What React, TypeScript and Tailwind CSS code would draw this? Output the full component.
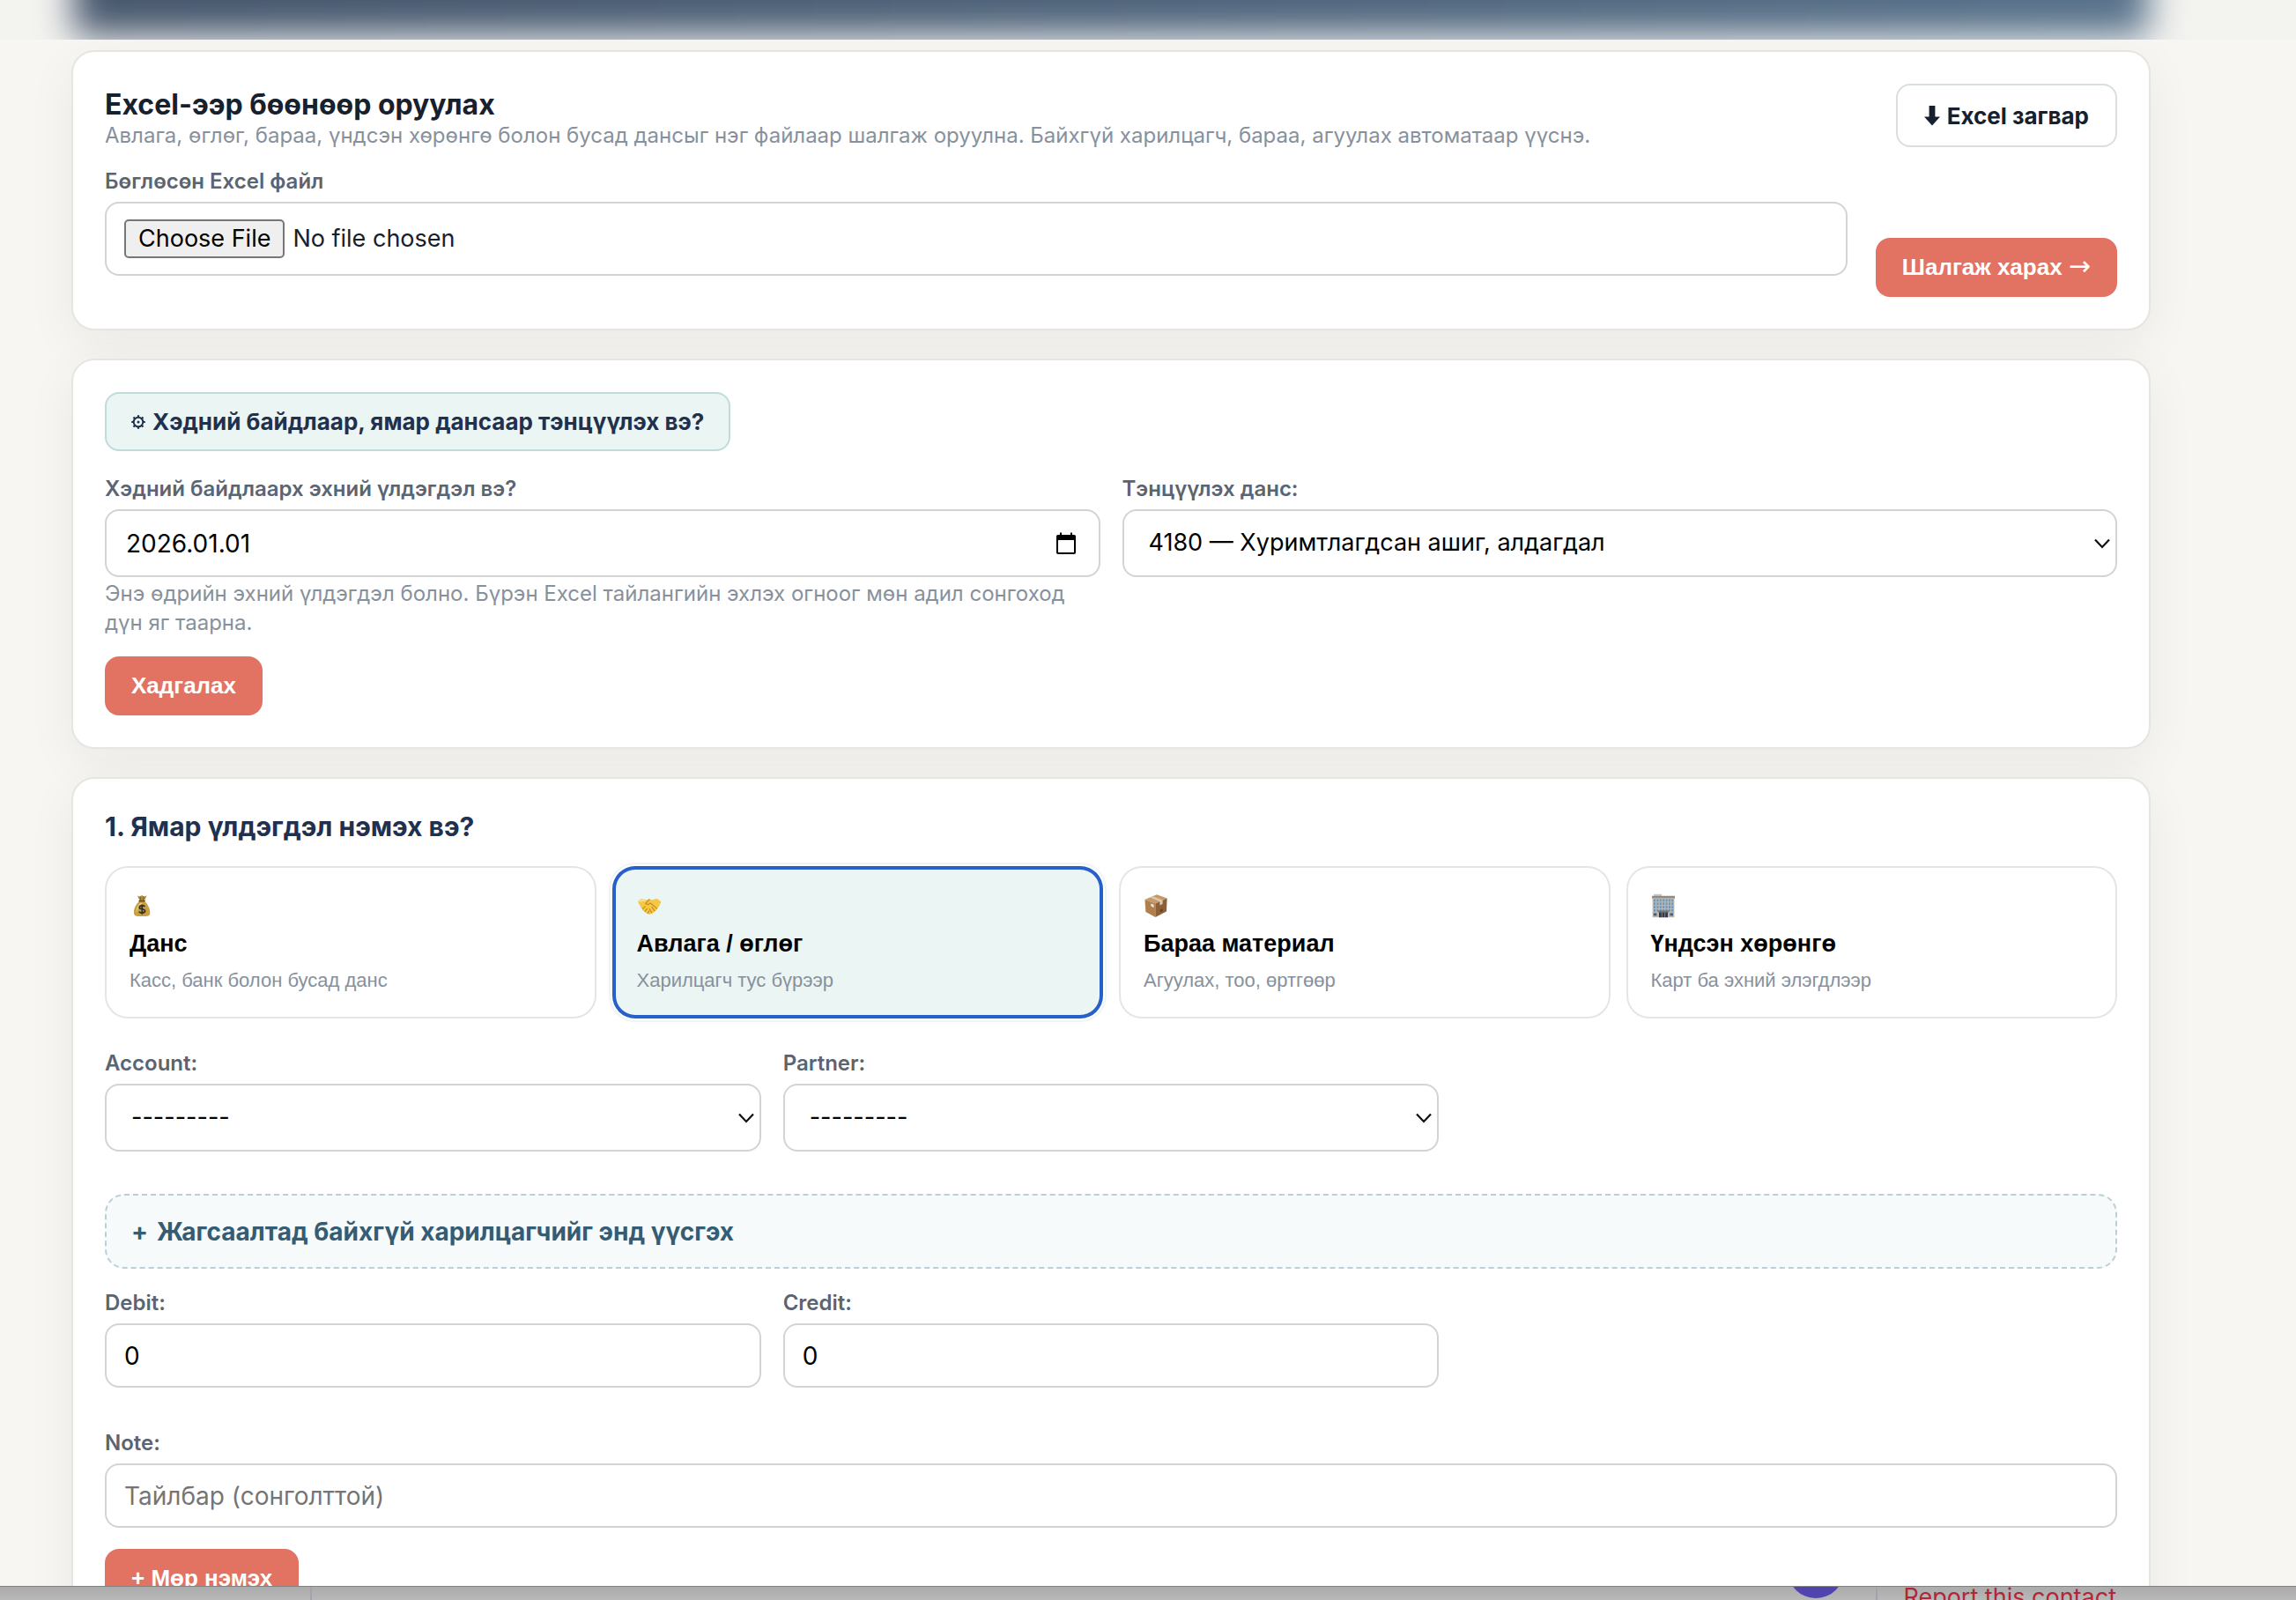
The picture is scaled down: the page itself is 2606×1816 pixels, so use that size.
import React, { useState } from 'react';

const label = 'block text-[24px] leading-[24px] font-semibold text-[#5b6471]';
const control =
  'w-full bg-white border-2 border-[#d0d5d4] rounded-[16px] text-black outline-none focus:border-[#2860cb]';
const primary =
  "h-[67px] px-[30px] rounded-[16px] bg-[#e27362] text-white font-bold text-[26px] font-['Liberation_Sans',sans-serif] whitespace-nowrap";
const hint = 'text-[24px] leading-[33px] text-[#87919c]';

const MoneyBag = () => (
  <svg viewBox="0 0 28 28" className="size-7" aria-hidden="true">
    <path d="M9 2.5 L11 3.5 L14 2.2 L17 3.5 L19.5 2.5 L17 8.5 H11.5 Z" fill="#b58a38" />
    <path d="M12 4 L13 8 M16 4 L15.4 8" stroke="#7c5a1e" strokeWidth="1" />
    <path d="M11.3 9 C7 12 4.5 18 5 22.5 C5.3 25.5 7 26 14 26 C21.5 26 23 25.5 23.3 22.5 C23.6 18 21 12 17 9 Z" fill="#c9a144" />
    <path d="M12 11 C9 14 7.5 18 7.7 21.5 C9 19 11 14 15 11 Z" fill="#ecd27c" />
    <path d="M11 8.8 H17.2" stroke="#6d4d18" strokeWidth="1.6" strokeLinecap="round" />
    <path
      d="M17.4 14.8 C16.6 13.4 11.2 13.2 11.2 15.9 C11.2 18.5 17.6 17 17.6 20 C17.6 22.7 11.6 22.5 10.9 20.6 M14.3 12.4 V23.8"
      fill="none"
      stroke="#33302c"
      strokeWidth="1.7"
    />
  </svg>
);

const Handshake = () => (
  <svg viewBox="0 0 28 28" className="size-7" aria-hidden="true">
    <path
      d="M1 9.5 C2.5 7.5 4 6.5 6 6.2 L10.5 7.6 L14 6.6 L17 7.5 L22 6 C24 6.6 26 8 27.4 9.8 L24.6 15.5 L22.6 17.6 C22 19.6 20.8 20.6 19.4 20.8 C18.6 22.4 17.2 23 16 23 C14.6 24.4 13 24 12.2 22.8 C10.4 22.9 9.2 22 8.8 20.6 C7 20.4 6 19.2 6 17.8 C4.6 17 4 16 4 14.8 Z"
      fill="#f5c843"
    />
    <path d="M2.6 9.4 C4 8 6 7.4 9.5 8.6" stroke="#fbe48a" strokeWidth="1.6" fill="none" />
    <path
      d="M14 7 L9.8 11.4 C11.4 13.4 13.6 12.4 15.4 11 L22.6 17.4 M17 15.6 L20 19.8 M14.2 17.8 L16.8 22 M6.6 17.6 L9 15 M9 20.4 L11.4 17.6 M12 22.6 L13.8 20.2"
      stroke="#c98a1e"
      strokeWidth="1.2"
      fill="none"
      strokeLinecap="round"
    />
  </svg>
);

const Package = () => (
  <svg viewBox="0 0 28 28" className="size-7" aria-hidden="true">
    <path d="M1.4 7 L15 1.2 L26.6 5.6 L13.4 11.6 Z" fill="#c79a6c" />
    <path d="M1.4 7 L13.4 11.6 V27 L2.4 21 Z" fill="#b07f50" />
    <path d="M26.6 5.6 L13.4 11.6 V27 L26 20.4 Z" fill="#8d6038" />
    <path d="M7.2 4.6 L10.2 3.3 L21.6 7.8 V12 L18.4 13.4 V9.3 Z" fill="#dcc9b0" />
    <path d="M8.4 11.6 L11.6 12.8 V16.2 L8.4 14.6 Z" fill="#e9e4dc" />
    <path d="M19 18.6 L21.6 17.4 V20 L19 21.2 Z" fill="#5f3f22" />
  </svg>
);

const Office = () => (
  <svg viewBox="0 0 28 28" className="size-7" aria-hidden="true">
    <rect x="3" y="0.8" width="9" height="3" fill="#c9c9c6" />
    <rect x="1" y="2.8" width="26" height="3" fill="#8f8b85" />
    <rect x="1.6" y="5.4" width="24.8" height="21.8" fill="#b9b8b3" />
    {[6.6, 10.4, 14.2, 18].map((y) =>
      [3, 6.4, 9.8, 13.2, 16.6, 20, 23.2].map((x) => (
        <rect key={`${x}-${y}`} x={x} y={y} width="2" height="2.7" fill="#6f95b8" />
      )),
    )}
    <rect x="2.8" y="22.4" width="3.6" height="3" fill="#4c6076" />
    <rect x="21.4" y="22.4" width="3.6" height="3" fill="#4c6076" />
    <rect x="8" y="19.4" width="12" height="2" fill="#837468" />
    <rect x="9" y="21.4" width="10" height="5.8" fill="#2f3b4b" />
    <path d="M12.3 21.4 V27.2 M15.7 21.4 V27.2" stroke="#8b98a6" strokeWidth="0.8" />
  </svg>
);

const Gear = () => (
  <svg viewBox="0 0 16 16" className="size-4 shrink-0" fill="none" stroke="#1f314f" aria-hidden="true">
    <circle cx="8" cy="8" r="5.3" strokeWidth="2" />
    <circle cx="8" cy="8" r="1.5" fill="#1f314f" stroke="none" />
    <path
      d="M8 0.2 V2.4 M8 13.6 V15.8 M0.2 8 H2.4 M13.6 8 H15.8 M2.5 2.5 L4.2 4.2 M11.8 11.8 L13.5 13.5 M13.5 2.5 L11.8 4.2 M4.2 11.8 L2.5 13.5"
      strokeWidth="2.2"
    />
  </svg>
);

const Chevron = () => (
  <svg
    viewBox="0 0 18 12"
    className="absolute right-[8px] top-1/2 -mt-[6px] w-[18px] h-[12px] pointer-events-none"
    fill="none"
    stroke="#111"
    strokeWidth="2.2"
    aria-hidden="true"
  >
    <path d="M1 1.5 L9 10 L17 1.5" />
  </svg>
);

const Calendar = () => (
  <svg viewBox="0 0 24 26" className="w-[24px] h-[26px]" aria-hidden="true">
    <path
      d="M5 0.5 H7 V3 H17 V0.5 H19 V3 H21 C22.4 3 23 3.8 23 5 V23 C23 24.3 22.3 25 21 25 H3 C1.7 25 1 24.3 1 23 V5 C1 3.8 1.7 3 3 3 H5 Z M3 9 V23 H21 V9 Z"
      fill="#000"
      fillRule="evenodd"
    />
  </svg>
);

const Card = ({ children }: { children: React.ReactNode }) => (
  <section className="bg-white border-2 border-[#e5e6df] rounded-[26px] p-9 shadow-[0_16px_56px_rgba(30,35,70,0.06)]">
    {children}
  </section>
);

type SelectProps = { id: string; title: string; options: string[] };

const SelectField = ({ id, title, options }: SelectProps) => (
  <div>
    <label htmlFor={id} className={label}>{title}</label>
    <div className="relative mt-[11px]">
      <select id={id} className={`${control} appearance-none h-[77px] pl-[28px] pr-10 text-[27px]`}>
        {options.map((o) => (
          <option key={o}>{o}</option>
        ))}
      </select>
      <Chevron />
    </div>
  </div>
);

type InputProps = { id: string; title: string; value?: string; placeholder?: string };

const InputField = ({ id, title, value, placeholder }: InputProps) => (
  <div>
    <label htmlFor={id} className={label}>{title}</label>
    <input
      id={id}
      type="text"
      defaultValue={value}
      placeholder={placeholder}
      className={`${control} mt-[11px] h-[73px] px-5 text-[28px] placeholder:text-[#757575]`}
    />
  </div>
);

const kinds = [
  { title: 'Данс', text: 'Касс, банк болон бусад данс', icon: <MoneyBag /> },
  { title: 'Авлага / өглөг', text: 'Харилцагч тус бүрээр', icon: <Handshake /> },
  { title: 'Бараа материал', text: 'Агуулах, тоо, өртгөөр', icon: <Package /> },
  { title: 'Үндсэн хөрөнгө', text: 'Карт ба эхний элэгдлээр', icon: <Office /> },
];

const App = () => {
  const [kind, setKind] = useState(1);

  return (
    <div className="h-screen flex flex-col overflow-hidden bg-[#f7f6f2] text-[#17212d] font-[Inter,'Noto_Sans',sans-serif]">
      {/* Frosted top bar with the hero banner behind it */}
      <header className="relative h-[45px] shrink-0 overflow-hidden bg-[#f3f3f0]">
        <div className="absolute left-[84px] right-[168px] -top-20 h-[120px] blur-[20px] bg-linear-to-r from-[#46566c] to-[#57718a]" />
      </header>

      <main className="flex-1 min-h-0 overflow-hidden pt-3 pl-[81px] pr-[165px] flex flex-col gap-8">
        <Card>
          <div className="flex justify-between items-start">
            <div className="pt-[6px]">
              <h2 className="text-[32px] leading-[36px] font-bold">Excel-ээр бөөнөөр оруулах</h2>
              <p className={hint}>
                Авлага, өглөг, бараа, үндсэн хөрөнгө болон бусад дансыг нэг файлаар шалгаж оруулна. Байхгүй харилцагч, бараа, агуулах автоматаар үүснэ.
              </p>
            </div>
            <a
              href="#template"
              className="h-[72px] px-[30px] flex items-center gap-2 rounded-[16px] border-2 border-[#d9dfde] bg-white text-[26px] font-bold whitespace-nowrap"
            >
              <svg viewBox="0 0 18 24" className="w-[18px] h-[24px]" fill="#17212d" aria-hidden="true">
                <path d="M5.6 1 H12.4 V13.5 H18 L9 23.5 L0 13.5 H5.6 Z" />
              </svg>
              Excel загвар
            </a>
          </div>
          <form className="mt-6 flex items-end gap-8">
            <div className="flex-1">
              <label htmlFor="file" className={label}>Бөглөсөн Excel файл</label>
              <input
                id="file"
                type="file"
                className="block w-full mt-[11px] mb-6 h-[84px] px-5 py-[18px] bg-white border-2 border-[#d0d5d4] rounded-[16px] text-[27px] leading-[40px] file:h-[44px] file:px-[14px] file:mr-[9px] file:border-2 file:border-[#767676] file:rounded-[5px] file:bg-[#efefef] file:text-black"
              />
            </div>
            <button type="button" className={primary}>
              Шалгаж харах <span className="font-['DejaVu_Sans'] font-normal text-[30px] leading-none">→</span>
            </button>
          </form>
        </Card>

        <Card>
          <h2 className="w-fit h-[67px] px-[28px] flex items-center gap-2 rounded-[16px] border-2 border-[#bfdcda] bg-[#ebf5f4] text-[26px] font-bold text-[#1f314f]">
            <Gear />
            Хэдний байдлаар, ямар дансаар тэнцүүлэх вэ?
          </h2>
          <form>
            <div className="mt-[31px] grid grid-cols-2 gap-[25px]">
              <div>
                <label htmlFor="date" className={label}>Хэдний байдлаарх эхний үлдэгдэл вэ?</label>
                <div className="mt-[11px] h-[77px] flex items-center pl-[22px] pr-[25px] bg-white border-2 border-[#d0d5d4] rounded-[16px]">
                  <input id="date" type="text" defaultValue="2026.01.01" className="flex-1 min-w-0 text-[28px] text-black outline-none" />
                  <button type="button" aria-label="Огноо сонгох">
                    <Calendar />
                  </button>
                </div>
                <p className={`mt-[2px] ${hint}`}>
                  Энэ өдрийн эхний үлдэгдэл болно. Бүрэн Excel тайлангийн эхлэх огноог мөн адил сонгоход дүн яг таарна.
                </p>
              </div>
              <SelectField id="balance" title="Тэнцүүлэх данс:" options={['4180 — Хуримтлагдсан ашиг, алдагдал']} />
            </div>
            <button type="button" className={`${primary} block mt-[22px]`}>Хадгалах</button>
          </form>
        </Card>

        <Card>
          <h2 className="text-[30px] leading-[36px] font-bold text-[#1f314f]">1. Ямар үлдэгдэл нэмэх вэ?</h2>
          <div className="mt-[27px] grid grid-cols-4 gap-[18px] font-['Liberation_Sans',sans-serif]">
            {kinds.map((k, i) => (
              <button
                key={k.title}
                type="button"
                onClick={() => setKind(i)}
                className={`h-[173px] pl-[28px] pr-6 flex flex-col items-start justify-center rounded-[26px] text-left ${
                  i === kind
                    ? 'bg-[#ebf5f4] inset-ring-4 inset-ring-[#2860cb] outline-2 outline-offset-2 outline-[#eef5f4]'
                    : 'bg-white inset-ring-2 inset-ring-[#e5e6df]'
                }`}
              >
                {k.icon}
                <span className="mt-[13px] text-[27px] leading-[32px] font-bold text-black">{k.title}</span>
                <span className="mt-[14px] text-[22px] leading-[24px] text-[#87919c]">{k.text}</span>
              </button>
            ))}
          </div>

          <form>
            <div className="mt-[39px] grid grid-cols-3 gap-[25px]">
              <SelectField id="account" title="Account:" options={['---------']} />
              <SelectField id="partner" title="Partner:" options={['---------']} />
            </div>
            <button
              type="button"
              className="mt-12 w-full h-[85px] px-[28px] flex items-center gap-[10px] rounded-[22px] border-2 border-dashed border-[#bbcfd6] bg-[#f6fafb] text-[28px] font-bold text-[#355c73]"
            >
              <span>+</span>
              <span>Жагсаалтад байхгүй харилцагчийг энд үүсгэх</span>
            </button>
            <div className="mt-[27px] grid grid-cols-3 gap-[25px]">
              <InputField id="debit" title="Debit:" value="0" />
              <InputField id="credit" title="Credit:" value="0" />
            </div>
            <div className="mt-[51px]">
              <InputField id="note" title="Note:" placeholder="Тайлбар (сонголттой)" />
            </div>
            <button type="button" className={`${primary} block mt-6`}>+ Мөр нэмэх</button>
          </form>
        </Card>
      </main>

      {/* Edge of the chat window under the page */}
      <footer className="relative h-4 shrink-0 overflow-hidden border-t border-[#838383] bg-linear-to-b from-[#ababab] to-[#b8b8b8] flex justify-between">
        <div className="w-[354px] border-r-2 border-[#a3a3ab]" />
        <div className="flex pr-[204px]">
          <div className="size-[64px] -mt-[51px] mr-[36px] rounded-full bg-[#5144ae]" />
          <div className="border-l-2 border-[#a3a3ab] pl-[29px]">
            <a href="#report" className="block text-[27px] leading-[24px] text-[#b12738]">Report this contact</a>
          </div>
        </div>
      </footer>
    </div>
  );
};

export default App;
